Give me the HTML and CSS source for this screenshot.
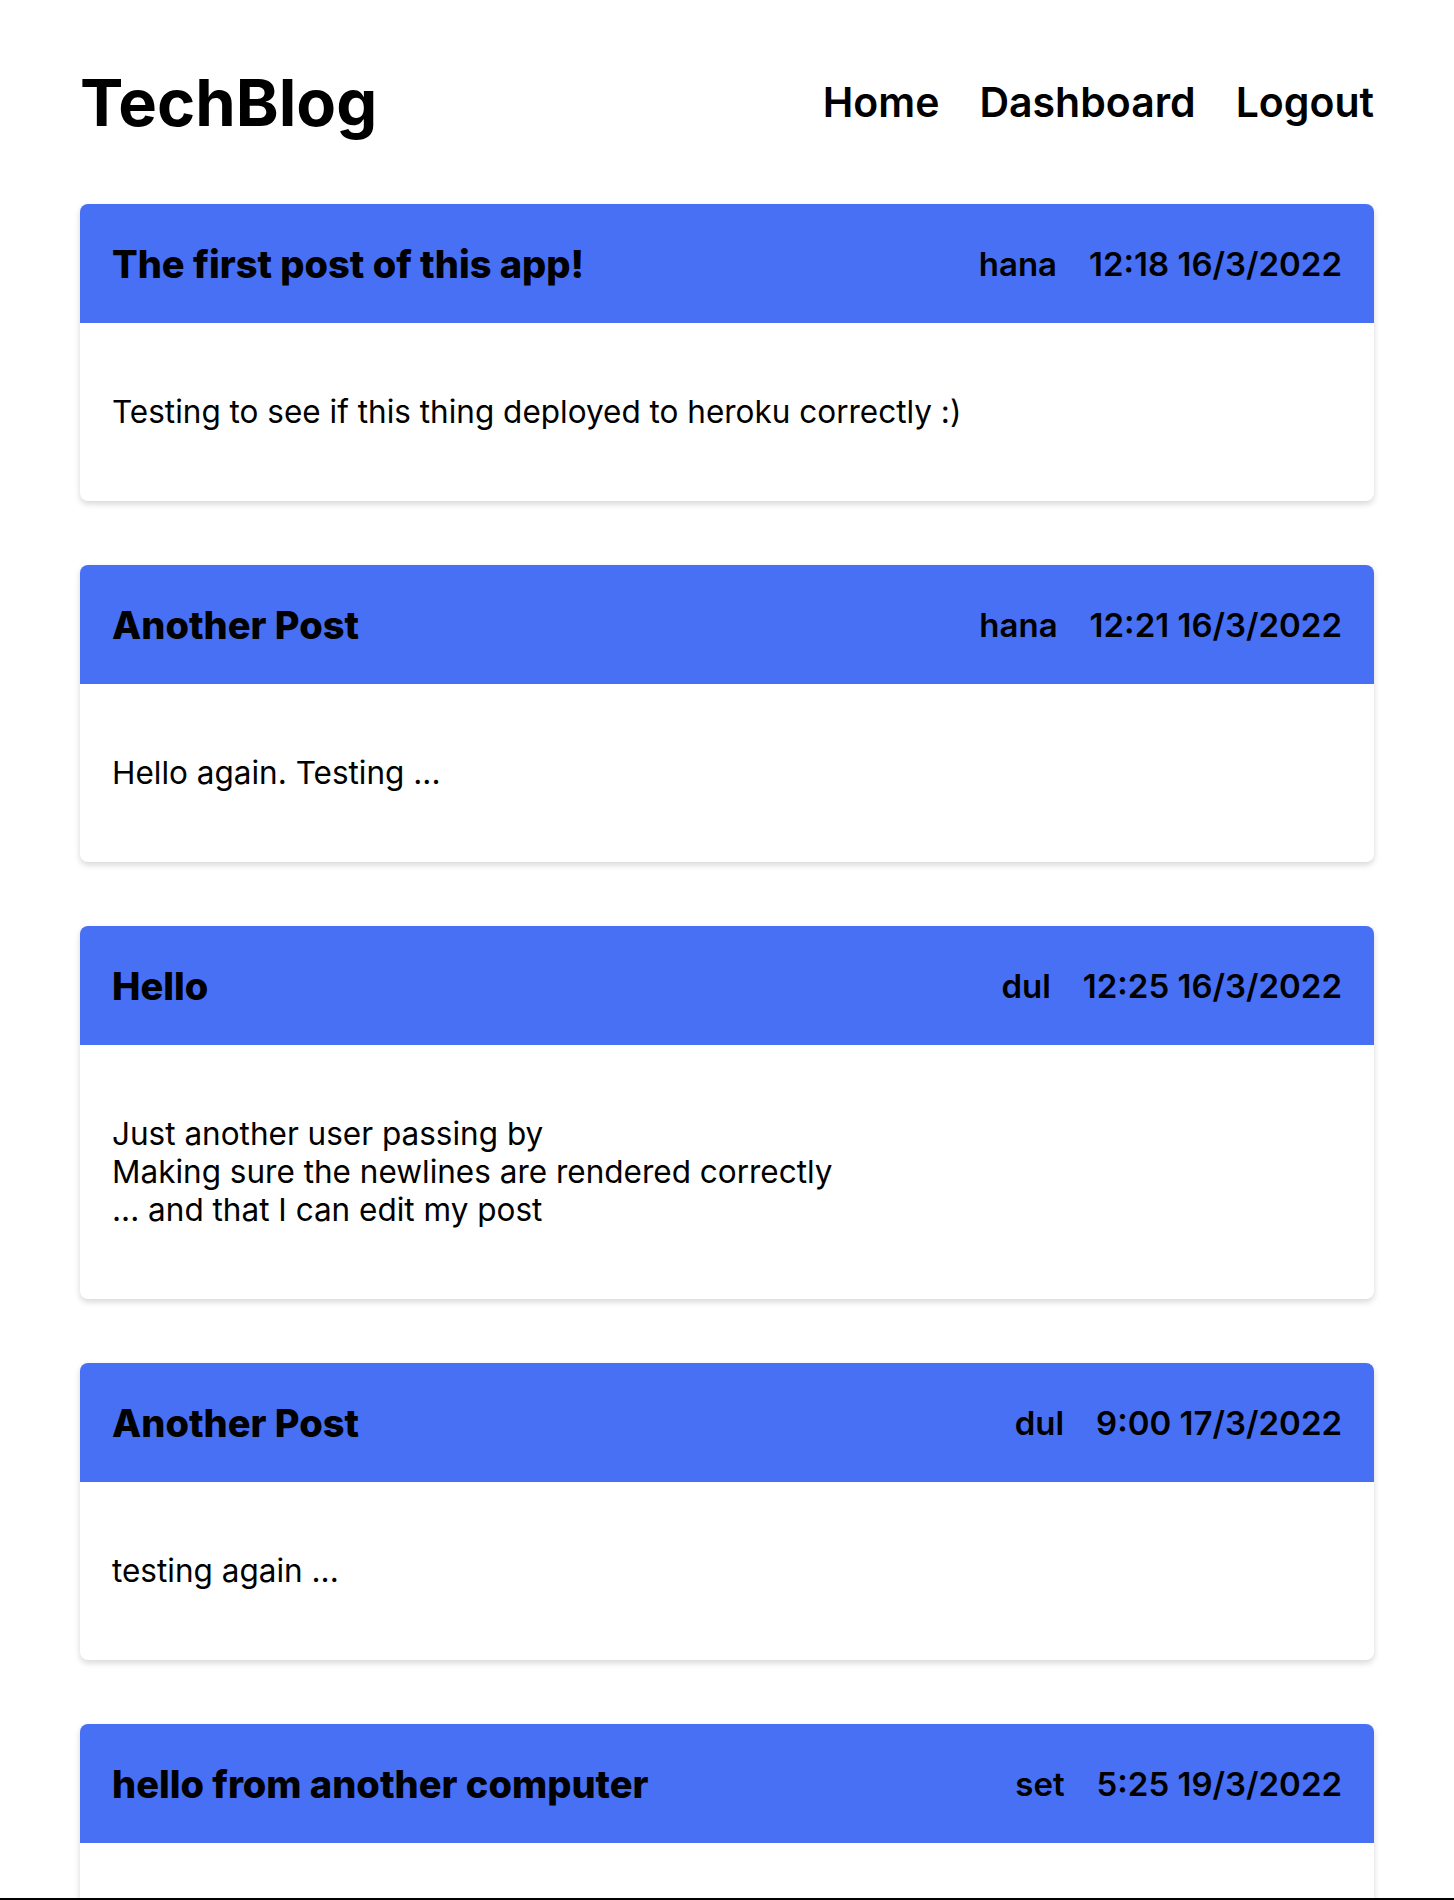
FILE: index.html
```html
<!DOCTYPE html>
<html lang="en">
<head>
<meta charset="utf-8">
<title>TechBlog</title>
<link rel="stylesheet" href="styles.css">
</head>
<body>
<div class="page">
  <header class="site-header">
    <h1 class="logo">TechBlog</h1>
    <nav class="nav">
      <a href="#" class="nav-link">Home</a>
      <a href="#" class="nav-link">Dashboard</a>
      <a href="#" class="nav-link">Logout</a>
    </nav>
  </header>
  <main class="posts">
    <article class="post">
      <div class="post-head">
        <h2 class="post-title">The first post of this app!</h2>
        <div class="post-meta"><span>hana</span><span>12:18 16/3/2022</span></div>
      </div>
      <div class="post-body"><p>Testing to see if this thing deployed to heroku correctly :)</p></div>
    </article>
    <article class="post">
      <div class="post-head">
        <h2 class="post-title">Another Post</h2>
        <div class="post-meta"><span>hana</span><span>12:21 16/3/2022</span></div>
      </div>
      <div class="post-body"><p>Hello again. Testing ...</p></div>
    </article>
    <article class="post">
      <div class="post-head">
        <h2 class="post-title">Hello</h2>
        <div class="post-meta"><span>dul</span><span>12:25 16/3/2022</span></div>
      </div>
      <div class="post-body"><p>Just another user passing by<br>Making sure the newlines are rendered correctly<br>... and that I can edit my post</p></div>
    </article>
    <article class="post">
      <div class="post-head">
        <h2 class="post-title">Another Post</h2>
        <div class="post-meta"><span>dul</span><span>9:00 17/3/2022</span></div>
      </div>
      <div class="post-body"><p>testing again ...</p></div>
    </article>
    <article class="post">
      <div class="post-head">
        <h2 class="post-title">hello from another computer</h2>
        <div class="post-meta"><span>set</span><span>5:25 19/3/2022</span></div>
      </div>
      <div class="post-body post-body-tall"></div>
    </article>
  </main>
</div>
<div class="bottom-line"></div>
</body>
</html>
```
FILE: styles.css
```css
html, body {
  margin: 0;
  padding: 0;
  background: #ffffff;
  color: #000000;
  font-family: Inter, "Noto Sans", sans-serif;
}

.page {
  padding: 0 80px 80px;
}

.site-header {
  display: flex;
  justify-content: space-between;
  align-items: center;
  height: 204px;
}

.logo {
  margin: 0;
  font-size: 65px;
  font-weight: 700;
  line-height: 1;
}

.nav {
  display: flex;
  gap: 40px;
}

.nav-link {
  color: #000;
  text-decoration: none;
  font-size: 41px;
  font-weight: 600;
}

.posts {
  display: flex;
  flex-direction: column;
  gap: 64px;
}

.post {
  border-radius: 8px;
  background: #fff;
  box-shadow: 0 3px 6px rgba(0, 0, 0, 0.16);
  overflow: hidden;
}

.post-head {
  display: flex;
  justify-content: space-between;
  align-items: center;
  height: 119px;
  padding: 0 32px;
  background: #4870f4;
}

.post-title {
  margin: 0;
  font-size: 38px;
  font-weight: 800;
}

.post-meta {
  display: flex;
  gap: 32px;
  font-size: 33px;
  font-weight: 600;
}

.post-body {
  padding: 70px 32px;
}

.post-body-tall {
  min-height: 38px;
}

.post-body p {
  margin: 0;
  font-size: 31.5px;
  line-height: 38px;
}

.bottom-line {
  position: fixed;
  left: 0;
  right: 0;
  bottom: 0;
  height: 2px;
  background: #000;
}
```
